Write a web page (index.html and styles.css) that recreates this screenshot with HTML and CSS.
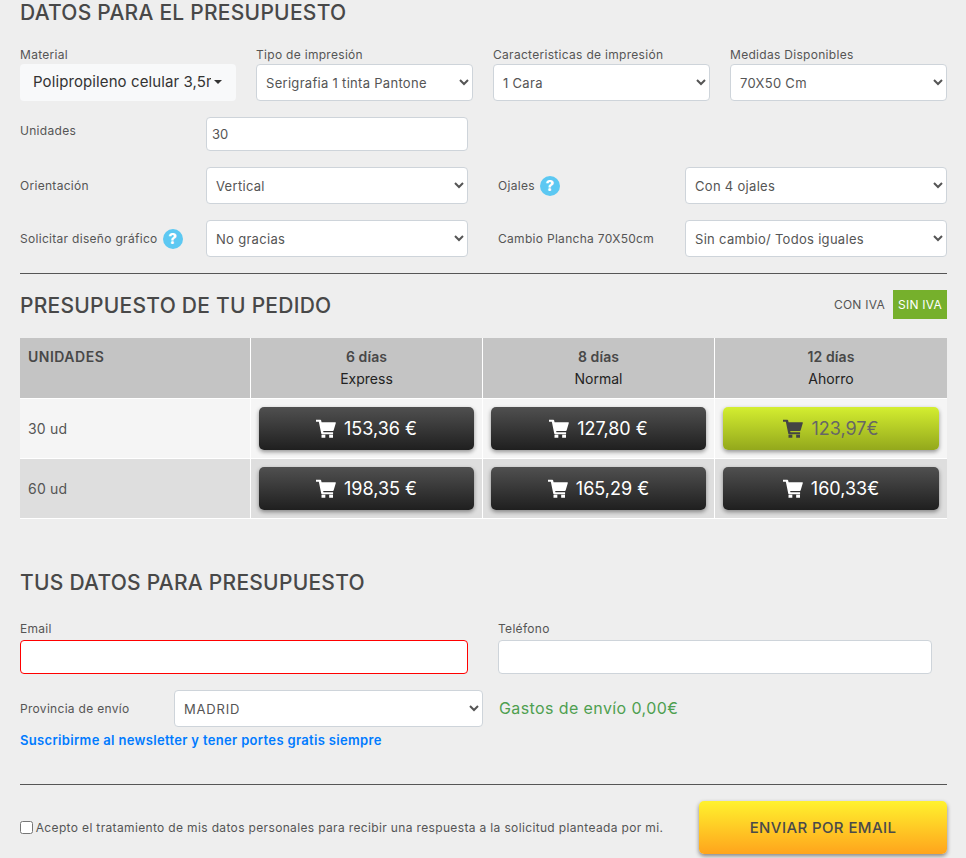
FILE: index.html
```html
<!DOCTYPE html>
<html lang="es">
<head>
<meta charset="utf-8">
<title>Presupuesto</title>
<link rel="stylesheet" href="styles.css">
</head>
<body>
<svg class="defs" width="0" height="0"><defs>
<symbol id="cart" viewBox="0 0 24 22"><path d="M0 .5h5.2q.8 0 1 .8L6.7 3.5H23.2q.8 0 .6.8l-2.6 8.9q-.2.8-1 .8H8.6l.4 1.6H20.5v2.2H7.2q-.7 0-.9-.7L3.4 2.8H0zM6.6 18.6h4.6v3.4H6.6zM15.8 18.6h4.6v3.4h-4.6z"/></symbol>
</defs></svg>
<main class="page">
  <h2 class="title first">DATOS PARA EL PRESUPUESTO</h2>
  <div class="top-grid">
    <div class="field">
      <span class="label">Material</span>
      <button class="dropdown" type="button"><span class="dropdown-text">Polipropileno celular 3,5mm</span><i class="caret"></i></button>
    </div>
    <div class="field">
      <span class="label">Tipo de impresión</span>
      <select class="control"><option>Serigrafia 1 tinta Pantone</option></select>
    </div>
    <div class="field">
      <span class="label">Caracteristicas de impresión</span>
      <select class="control"><option>1 Cara</option></select>
    </div>
    <div class="field">
      <span class="label">Medidas Disponibles</span>
      <select class="control"><option>70X50 Cm</option></select>
    </div>
  </div>

  <div class="opt-grid">
    <span class="label up">Unidades</span>
    <input class="control text-input units" value="30">
    <span></span><span></span>

    <span class="label">Orientación</span>
    <select class="control"><option>Vertical</option></select>
    <span class="label with-help side">Ojales <b class="help">?</b></span>
    <select class="control"><option>Con 4 ojales</option></select>

    <span class="label with-help">Solicitar diseño gráfico <b class="help">?</b></span>
    <select class="control"><option>No gracias</option></select>
    <span class="label side">Cambio Plancha 70X50cm</span>
    <select class="control"><option>Sin cambio/ Todos iguales</option></select>
  </div>

  <hr class="rule rule-one">

  <div class="title-row">
    <h2 class="title">PRESUPUESTO DE TU PEDIDO</h2>
    <div class="vat">
      <span class="vat-off">CON IVA</span>
      <span class="vat-on">SIN IVA</span>
    </div>
  </div>

  <div class="prices">
    <div class="cell head head-first">UNIDADES</div>
    <div class="cell head"><strong>6 días</strong><span>Express</span></div>
    <div class="cell head"><strong>8 días</strong><span>Normal</span></div>
    <div class="cell head"><strong>12 días</strong><span>Ahorro</span></div>

    <div class="cell row-a name">30 ud</div>
    <div class="cell row-a"><button class="price" type="button"><svg class="cart"><use href="#cart"/></svg>153,36 €</button></div>
    <div class="cell row-a"><button class="price" type="button"><svg class="cart"><use href="#cart"/></svg>127,80 €</button></div>
    <div class="cell row-a"><button class="price best" type="button"><svg class="cart"><use href="#cart"/></svg>123,97€</button></div>

    <div class="cell row-b name">60 ud</div>
    <div class="cell row-b"><button class="price" type="button"><svg class="cart"><use href="#cart"/></svg>198,35 €</button></div>
    <div class="cell row-b"><button class="price" type="button"><svg class="cart"><use href="#cart"/></svg>165,29 €</button></div>
    <div class="cell row-b"><button class="price" type="button"><svg class="cart"><use href="#cart"/></svg>160,33€</button></div>
  </div>

  <h2 class="title third">TUS DATOS PARA PRESUPUESTO</h2>

  <div class="contact">
    <div class="field">
      <span class="label">Email</span>
      <input class="control text-input invalid">
    </div>
    <div class="field phone">
      <span class="label">Teléfono</span>
      <input class="control text-input">
    </div>
  </div>

  <div class="ship">
    <span class="label ship-label">Provincia de envío</span>
    <select class="control ship-select"><option>MADRID</option></select>
    <span class="ship-cost">Gastos de envío 0,00€</span>
  </div>
  <a class="news" href="#">Suscribirme al newsletter y tener portes gratis siempre</a>

  <hr class="rule rule-two">

  <div class="send-row">
    <label class="consent"><input type="checkbox"> Acepto el tratamiento de mis datos personales para recibir una respuesta a la solicitud planteada por mi.</label>
    <button class="send" type="button">ENVIAR POR EMAIL</button>
  </div>
</main>
</body>
</html>
```
FILE: styles.css
```css
* { box-sizing: border-box; }
html, body { margin: 0; padding: 0; }
body {
  background: #eeeeee;
  color: #555;
  font-family: Inter, "Liberation Sans", sans-serif;
  font-size: 12px;
  height: 858px;
  overflow: hidden;
}
.defs { position: absolute; }
.page { padding: 0 19px 0 20px; }
.title {
  margin: 0;
  font-size: 21px;
  line-height: 24px;
  font-weight: 500;
  color: #484848;
  letter-spacing: .25px;
}
.title.first { height: 24px; line-height: 26px; }
.top-grid {
  display: grid;
  grid-template-columns: 216px 217px 217px 217px;
  column-gap: 20px;
  margin-top: 23px;
}
.field { display: flex; flex-direction: column; }
.label {
  font-size: 12px;
  line-height: 16px;
  color: #555;
  white-space: nowrap;
  letter-spacing: .3px;
}
.top-grid .label { height: 17px; }
.contact .label { height: 19px; }
.control {
  height: 37px;
  width: 100%;
  background: #fff;
  border: 1px solid #ced4da;
  border-radius: 4px;
  padding: 0 5px;
  font-family: inherit;
  font-size: 13px;
  letter-spacing: .3px;
  color: #555;
  margin: 0;
}
.text-input { height: 34px; padding: 0 5px; letter-spacing: 0; }
.dropdown {
  height: 37px;
  width: 216px;
  border: 0;
  border-radius: 4px;
  background: #f8f9fa;
  color: #333;
  font-family: inherit;
  font-size: 15px;
  letter-spacing: .1px;
  display: flex;
  align-items: center;
  padding: 0 13px 2px 13px;
  gap: 3px;
}
.dropdown-text {
  overflow: hidden;
  white-space: nowrap;
  width: 178px;
  text-align: left;
}
.caret {
  width: 0; height: 0;
  border-left: 4px solid transparent;
  border-right: 4px solid transparent;
  border-top: 4px solid #333;
}
.opt-grid {
  display: grid;
  grid-template-columns: 186px 262px 217px 262px;
  align-items: center;
  margin-top: 16px;
  grid-template-rows: 34px 37px 37px;
  row-gap: 16px;
}
.opt-grid .side { margin-left: 30px; }
.label.up { align-self: start; margin-top: 6px; }
.with-help { display: flex; align-items: center; gap: 5px; }
.help {
  width: 20px; height: 20px;
  border-radius: 50%;
  background: #5cc8f2;
  color: #fff;
  font-size: 15px;
  font-weight: 800;
  line-height: 20px;
  text-align: center;
  letter-spacing: 0;
}
.rule { border: 0; border-top: 1px solid #555; margin: 0; }
.rule-one { margin-top: 16px; }
.title-row {
  display: flex;
  justify-content: space-between;
  align-items: center;
  margin-top: 16px;
  height: 29px;
}
.title-row .title { padding-top: 2px; }
.vat { display: flex; align-items: center; gap: 8px; font-size: 12px; letter-spacing: .25px; }
.vat-off { color: #555; }
.vat-on {
  width: 54px; height: 29px;
  background: #76b02c;
  color: #fff;
  display: flex;
  align-items: center;
  justify-content: center;
}
.prices {
  display: grid;
  grid-template-columns: 230px 231px 231px 232px;
  column-gap: 1px;
  margin-top: 19px;
  grid-template-rows: 60px 59px 59px;
  row-gap: 1px;
  border-bottom: 1px solid #fff;
  background: #fff;
  width: 927px;
}
.cell {
  display: flex;
  align-items: center;
  justify-content: center;
  padding: 0 8px;
}
.head {
  background: #c4c4c4;
  flex-direction: column;
  font-size: 14px;
  line-height: 22px;
  color: #222;
}
.head strong { font-weight: 600; color: #484848; letter-spacing: .1px; }
.head-first {
  align-items: flex-start;
  justify-content: flex-start;
  padding-top: 8px;
  font-weight: 600;
  color: #484848;
  letter-spacing: .5px;
}
.row-a { background: #f5f5f5; }
.row-b { background: #dedede; }
.name { justify-content: flex-start; font-size: 14px; letter-spacing: .2px; }
.price {
  width: 100%;
  height: 43px;
  border: 0;
  border-radius: 5px;
  background: linear-gradient(#505050, #1f1f1f);
  box-shadow: 0 2px 4px rgba(0,0,0,.4);
  color: #fff;
  font-family: inherit;
  font-size: 18px;
  display: flex;
  align-items: center;
  justify-content: center;
  gap: 8px;
  padding: 0;
}
.price.best {
  background: linear-gradient(#d4ee30, #93a81c);
  color: #666;
}
.price.best .cart { fill: #444; }
.cart { width: 20px; height: 19px; fill: currentColor; }
.title.third { margin-top: 52px; }
.contact {
  display: grid;
  grid-template-columns: 448px 434px;
  column-gap: 30px;
  margin-top: 26px;
}
.invalid { border-color: #f00; }
.ship {
  display: grid;
  grid-template-columns: 154px 309px auto;
  align-items: center;
  margin-top: 16px;
}
.ship-select { letter-spacing: .8px; }
.ship-cost { margin-left: 16px; font-size: 16px; letter-spacing: .4px; color: #4e9f50; padding-bottom: 2px; }
.news {
  display: block;
  margin-top: 5px;
  font-size: 13px;
  line-height: 16px;
  font-weight: 600;
  letter-spacing: .33px;
  color: #007bff;
  text-decoration: none;
}
.rule-two { margin-top: 36px; }
.send-row {
  display: flex;
  justify-content: space-between;
  align-items: center;
  margin-top: 16px;
}
.consent { display: flex; align-items: center; font-size: 12px; letter-spacing: .35px; white-space: pre; }
.consent input { margin: 0 -1px 0 0; width: 13px; height: 13px; }
.send {
  width: 248px;
  height: 53px;
  border: 0;
  border-radius: 5px;
  background: linear-gradient(#fff22e, #ffa41c);
  box-shadow: 0 2px 4px rgba(0,0,0,.45);
  color: #4a4a4a;
  font-family: inherit;
  font-size: 15px;
  font-weight: 500;
  letter-spacing: .4px;
}
```
